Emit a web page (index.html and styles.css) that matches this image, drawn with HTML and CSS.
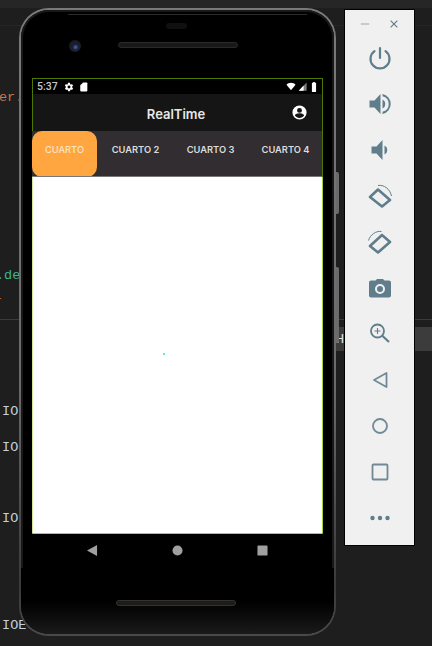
FILE: index.html
```html
<!DOCTYPE html>
<html lang="en">
<head>
  <meta charset="UTF-8">
  <title>RealTime</title>
  <meta name="viewport" content="width=device-width, initial-scale=1.0">
  <link rel="stylesheet" href="styles.css">
</head>
<body>

  <!-- editor behind the emulator -->
  <div class="editor">
    <div class="editor-rule"></div>
    <div class="editor-strip"></div>
    <span class="code code-er">er.</span>
    <span class="code code-de">.de</span>
    <span class="code code-arrow">-</span>
    <span class="code code-h">H</span>
    <span class="code code-io l1">:IOI</span>
    <span class="code code-io l2">:IOI</span>
    <span class="code code-io l3">:IOI</span>
    <span class="code code-io l4">:IOE.</span>
  </div>

  <!-- phone -->
  <span class="side-btn side-power"></span>
  <span class="side-btn side-volume"></span>
  <div class="phone">
    <div class="phone-top">
      <span class="top-glint"></span>
      <span class="earpiece"></span>
      <span class="camera"></span>
      <span class="speaker"></span>
    </div>

    <div class="screen">
      <div class="status">
        <span class="clock">5:37</span>
        <svg class="status-icon" viewBox="0 0 24 24"><path fill="#fff" d="M19.4 13c0-.3.1-.6.1-1s0-.7-.1-1l2.100-1.600c.2-.2.2-.4.1-.6l-2-3.500c-.1-.2-.4-.3-.6-.2l-2.500 1c-.5-.4-1.100-.7-1.700-1l-.4-2.600c0-.3-.2-.5-.5-.5h-4c-.3 0-.5.2-.5.4l-.4 2.700c-.6.2-1.100.6-1.700 1l-2.500-1c-.2-.1-.5 0-.6.2l-2 3.500c-.1.2-.1.4.1.6L4.600 11c0 .3-.1.7-.1 1s0 .7.1 1l-2.100 1.600c-.2.2-.2.4-.1.6l2 3.500c.1.2.4.3.6.2l2.500-1c.5.4 1.100.7 1.700 1l.4 2.600c0 .3.2.5.5.5h4c.3 0 .5-.2.5-.4l.4-2.700c.6-.2 1.100-.6 1.700-1l2.500 1c.2.1.5 0 .6-.2l2-3.500c.1-.2.1-.4-.1-.6zM12 15.500a3.500 3.500 0 1 1 0-7 3.500 3.500 0 0 1 0 7z"/></svg>
        <svg class="status-icon" viewBox="0 0 24 24"><path fill="#fff" d="M18 1h-8L3 8v13c0 1.100.9 2 2 2h13c1.100 0 2-.9 2-2V3c0-1.100-.9-2-2-2z"/></svg>
        <span class="status-gap"></span>
        <svg class="status-wifi" viewBox="0 0 24 24"><path fill="#fff" d="M12 22 0 7c3-3 7.500-5 12-5s9 2 12 5z"/></svg>
        <svg class="status-signal" viewBox="0 0 24 24"><path fill="#7d7d7d" d="M2 23 23 1v22z"/><path fill="#fff" d="M15 23V9.500L2 23z"/></svg>
        <svg class="status-battery" viewBox="0 0 12 24"><path fill="#fff" d="M4 0h4v2h2c.6 0 1 .4 1 1v20c0 .6-.4 1-1 1H2c-.6 0-1-.4-1-1V3c0-.6.4-1 1-1h2z"/></svg>
      </div>

      <div class="appbar">
        <span class="appbar-title">RealTime</span>
        <svg class="appbar-user" viewBox="0 0 24 24"><path fill="#fff" d="M12 2a10 10 0 1 0 0 20 10 10 0 0 0 0-20zm0 3.500a3.500 3.500 0 1 1 0 7 3.500 3.500 0 0 1 0-7zm0 14.300c-2.700 0-5-1.300-6.500-3.400 0-2.100 4.300-3.300 6.500-3.300s6.500 1.200 6.500 3.300c-1.500 2.100-3.800 3.400-6.500 3.400z"/></svg>
      </div>

      <div class="tabs">
        <div class="tab tab-active">CUARTO</div>
        <div class="tab">CUARTO 2</div>
        <div class="tab">CUARTO 3</div>
        <div class="tab">CUARTO 4</div>
      </div>

      <div class="content">
        <span class="spinner-dot"></span>
      </div>
    </div>

    <div class="navbar">
      <svg class="nav-icon" viewBox="0 0 12 12"><path fill="#a0a0a0" d="M11 0v12L0 6z"/></svg>
      <svg class="nav-icon" viewBox="0 0 12 12"><circle cx="6" cy="6" r="5.500" fill="#a0a0a0"/></svg>
      <svg class="nav-icon" viewBox="0 0 12 12"><rect x="0.500" y="0.500" width="11" height="11" rx="1" fill="#a0a0a0"/></svg>
    </div>

    <div class="phone-bottom">
      <span class="speaker speaker-low"></span>
    </div>
  </div>

  <!-- emulator toolbar -->
  <div class="toolbar">
    <div class="toolbar-head">
      <svg viewBox="0 0 12 12"><path stroke="#a9b8bf" stroke-width="1.500" d="M1 6h10"/></svg>
      <svg viewBox="0 0 12 12"><path stroke="#607d8b" stroke-width="1.400" d="M2 2l8 8M10 2l-8 8"/></svg>
    </div>
    <svg class="tool" viewBox="0 0 24 24"><path fill="none" stroke="#607d8b" stroke-width="2.200" stroke-linecap="round" d="M12 2v10M6.500 5.200a9.500 9.500 0 1 0 11 0"/></svg>
    <svg class="tool" viewBox="0 0 24 24"><path fill="#607d8b" d="M1.500 8.500v7h5l6 6.500V2l-6 6.500z"/><path fill="#607d8b" d="M14.500 7.500v9a5 5 0 0 0 0-9zM14.500 2v2.200a8 8 0 0 1 0 15.600V22a10.200 10.200 0 0 0 0-20z"/></svg>
    <svg class="tool" viewBox="0 0 24 24"><path fill="#607d8b" d="M3.500 8.500v7h5l6 6.500V2l-6 6.500zM16.500 7.500v9a5 5 0 0 0 0-9z"/></svg>
    <svg class="tool" viewBox="0 0 24 24"><path fill="none" stroke="#607d8b" stroke-width="2.600" stroke-linejoin="round" d="M2 13 10 5.500 22 16l-8 6.500z"/><path fill="none" stroke="#607d8b" stroke-width="1" d="M10 1.500C16 .5 22 5 23.500 12"/></svg>
    <svg class="tool" viewBox="0 0 24 24"><path fill="none" stroke="#607d8b" stroke-width="2.600" stroke-linejoin="round" d="M22 12 14 5 2 16l8 6.500z"/><path fill="none" stroke="#607d8b" stroke-width="1" d="M13.500 1.500C8 .5 2 5 .5 10.500"/></svg>
    <svg class="tool" viewBox="0 0 24 24"><path fill="#607d8b" fill-rule="evenodd" d="M9 3h6l1.500 1.500H21c1.100 0 2 .9 2 2v13c0 1.100-.9 2-2 2H3c-1.100 0-2-.9-2-2v-13c0-1.100.9-2 2-2h4.500zM12 8a5 5 0 1 0 0 10 5 5 0 0 0 0-10zm0 2a3 3 0 1 1 0 6 3 3 0 0 1 0-6z"/></svg>
    <svg class="tool" viewBox="0 0 24 24"><circle cx="9.500" cy="9" r="6.500" fill="none" stroke="#607d8b" stroke-width="1.800"/><path stroke="#607d8b" stroke-width="2.200" d="M14 13.500 21 20"/><path stroke="#607d8b" stroke-width="1.100" d="M9.500 6v6M6.500 9h6"/></svg>
    <svg class="tool" viewBox="0 0 24 24"><path fill="none" stroke="#6f8a96" stroke-width="1.800" stroke-linejoin="round" d="M18.500 5v14L6 12z"/></svg>
    <svg class="tool" viewBox="0 0 24 24"><circle cx="12" cy="12" r="7" fill="none" stroke="#6f8a96" stroke-width="1.800"/></svg>
    <svg class="tool" viewBox="0 0 24 24"><rect x="4.500" y="4.500" width="15" height="15" rx="1" fill="none" stroke="#6f8a96" stroke-width="1.800"/></svg>
    <svg class="tool" viewBox="0 0 24 24"><circle cx="4.500" cy="12" r="2.200" fill="#607d8b"/><circle cx="12" cy="12" r="2.200" fill="#607d8b"/><circle cx="19.500" cy="12" r="2.200" fill="#607d8b"/></svg>
  </div>

</body>
</html>
```

FILE: styles.css
```css
html, body {
  margin: 0;
  padding: 0;
}
body {
  width: 432px;
  height: 646px;
  overflow: hidden;
  position: relative;
  background: #1e1e1e;
  font-family: "Inter", "Roboto", Arial, sans-serif;
}

/* editor */
.editor {
  position: absolute;
  inset: 0;
  background: linear-gradient(#262626 0, #262626 8px, #1e1e1e 8px, #1e1e1e 25px, #262626 25px, #262626 26px, #1e1e1e 26px);
}
.editor-rule {
  position: absolute;
  left: 0;
  right: 0;
  top: 319px;
  height: 1px;
  background: #3b3b3b;
}
.editor-strip {
  position: absolute;
  left: 336px;
  right: 0;
  top: 327px;
  height: 24px;
  background: #3c3c3c;
}
.code {
  position: absolute;
  font-family: "Liberation Mono", monospace;
  font-size: 13.500px;
  line-height: 18px;
  white-space: nowrap;
}
.code-er {
  left: -1px;
  top: 89px;
  color: #c57a50;
}
.code-de {
  left: -4px;
  top: 267px;
  color: #3fb58f;
}
.code-arrow {
  left: -5px;
  top: 290px;
  color: #c8641e;
}
.code-h {
  left: 336px;
  top: 331px;
  color: #d5e4f0;
}
.code-io {
  left: -6px;
  color: #c3d0de;
}
.l1 { top: 403px; }
.l2 { top: 439px; }
.l3 { top: 510px; }
.l4 { top: 617px; }

/* phone */
.side-btn {
  position: absolute;
  left: 333px;
  width: 6px;
  background: #6b6b6b;
  border-radius: 2px;
}
.side-power {
  top: 172px;
  height: 42px;
}
.side-volume {
  top: 267px;
  height: 76px;
}
.phone {
  position: absolute;
  left: 19px;
  top: 8px;
  width: 317px;
  height: 628px;
  box-sizing: border-box;
  padding: 0 11px;
  display: flex;
  flex-direction: column;
  border: 2px solid transparent;
  border-radius: 30px;
  background: linear-gradient(#000, #000) padding-box, linear-gradient(#7a7a7a 0, #6a6a6a 60%, #3a3a3a 92%, #4a4a4a 100%) border-box;
  box-shadow: inset 0 0 0 2px #181818;
}
.phone-top {
  height: 68px;
  position: relative;
  flex: none;
}
.top-glint {
  position: absolute;
  left: 36px;
  right: 16px;
  top: 4px;
  height: 1px;
  background: #2c2c2c;
}
.earpiece {
  position: absolute;
  left: 134px;
  top: 13px;
  width: 21px;
  height: 6px;
  border-radius: 3px;
  background: #0f1012;
}
.camera {
  position: absolute;
  left: 37px;
  top: 30px;
  width: 12px;
  height: 12px;
  border-radius: 50%;
  background: radial-gradient(circle at 55% 60%, #4a68d0 0, #1a2030 30%, #15171c 100%);
}
.speaker {
  position: absolute;
  left: 86px;
  top: 32px;
  width: 120px;
  height: 6px;
  border-radius: 3px;
  background: #181818;
  border: 1px solid #2a2a2a;
  box-sizing: border-box;
}
.speaker-low {
  left: 95px;
  top: 31px;
  background: #1d1c1a;
  border-color: #33322f;
}

.screen {
  width: 291px;
  height: 456px;
  flex: none;
  box-sizing: border-box;
  border: 1px solid #4f7600;
  border-bottom-color: #a6d23a;
  display: flex;
  flex-direction: column;
  background: #fff;
}
.status {
  height: 15px;
  flex: none;
  background: #000;
  display: flex;
  align-items: center;
  padding: 0 5px 0 4px;
  gap: 5px;
  color: #c8c8c8;
}
.clock {
  font-family: "Roboto", Arial, sans-serif;
  font-size: 10.500px;
  font-weight: 500;
  width: 22px;
}
.status-icon {
  width: 10px;
  height: 10px;
}
.status-gap {
  flex: 1;
}
.status-wifi {
  width: 10px;
  height: 9px;
  margin-right: -3px;
}
.status-signal {
  width: 9px;
  height: 9px;
  margin-right: -1px;
}
.status-battery {
  width: 6px;
  height: 10px;
}

.appbar {
  height: 37px;
  flex: none;
  background: #151515;
  position: relative;
  display: flex;
  align-items: center;
  justify-content: center;
}
.appbar-title {
  color: #e8e8e8;
  font-size: 13px;
  font-weight: 600;
  margin-right: 3px;
  margin-top: 2px;
}
.appbar-user {
  position: absolute;
  right: 14px;
  top: 10px;
  width: 17px;
  height: 17px;
}

.tabs {
  height: 45px;
  flex: none;
  background: #312d31;
  border-bottom: 1px solid #777;
  margin-left: -1px;
  display: flex;
  overflow: hidden;
}
.tab {
  width: 75px;
  height: 45px;
  flex: none;
  box-sizing: border-box;
  padding-bottom: 9px;
  display: flex;
  align-items: center;
  justify-content: center;
  font-size: 9.300px;
  font-weight: 600;
  color: #dcdcdc;
  white-space: nowrap;
}
.tab-active {
  width: 65px;
  height: 46px;
  background: #ffa640;
  border-radius: 10px;
  color: #fbe3c6;
  font-weight: 500;
  margin-right: 1px;
  padding-bottom: 9px;
}

.content {
  flex: 1;
  background: #fff;
  position: relative;
  margin: 0 -1px;
  border-left: 1px solid #cfe89a;
  border-right: 1px solid #a6d23a;
}
.spinner-dot {
  position: absolute;
  left: 130px;
  top: 176px;
  width: 2px;
  height: 2px;
  background: #5fe8e0;
}

.navbar {
  height: 34px;
  flex: none;
  box-sizing: border-box;
  padding: 0 1px 2px 0;
  display: flex;
  justify-content: center;
  align-items: center;
  gap: 74px;
}
.nav-icon {
  width: 11px;
  height: 11px;
}
.phone-bottom {
  flex: 1;
  position: relative;
  background: linear-gradient(#000 50%, #1a1a1a 100%);
  margin: 0 -11px;
  border-radius: 0 0 28px 28px;
}
.phone-bottom .speaker-low {
  top: 32px;
}

/* toolbar */
.toolbar {
  position: absolute;
  left: 344px;
  top: 9px;
  width: 69px;
  height: 535px;
  background: #f0f0f0;
  border: 1px solid #000;
  display: flex;
  flex-direction: column;
  align-items: center;
}
.toolbar-head {
  height: 36px;
  flex: none;
  width: 100%;
  box-sizing: border-box;
  padding: 9px 15px 0 15px;
  display: flex;
  justify-content: space-between;
  align-items: flex-start;
}
.toolbar-head svg {
  width: 10px;
  height: 10px;
}
.tool {
  width: 24px;
  height: 24px;
  margin-bottom: 22px;
  flex: none;
}
```
